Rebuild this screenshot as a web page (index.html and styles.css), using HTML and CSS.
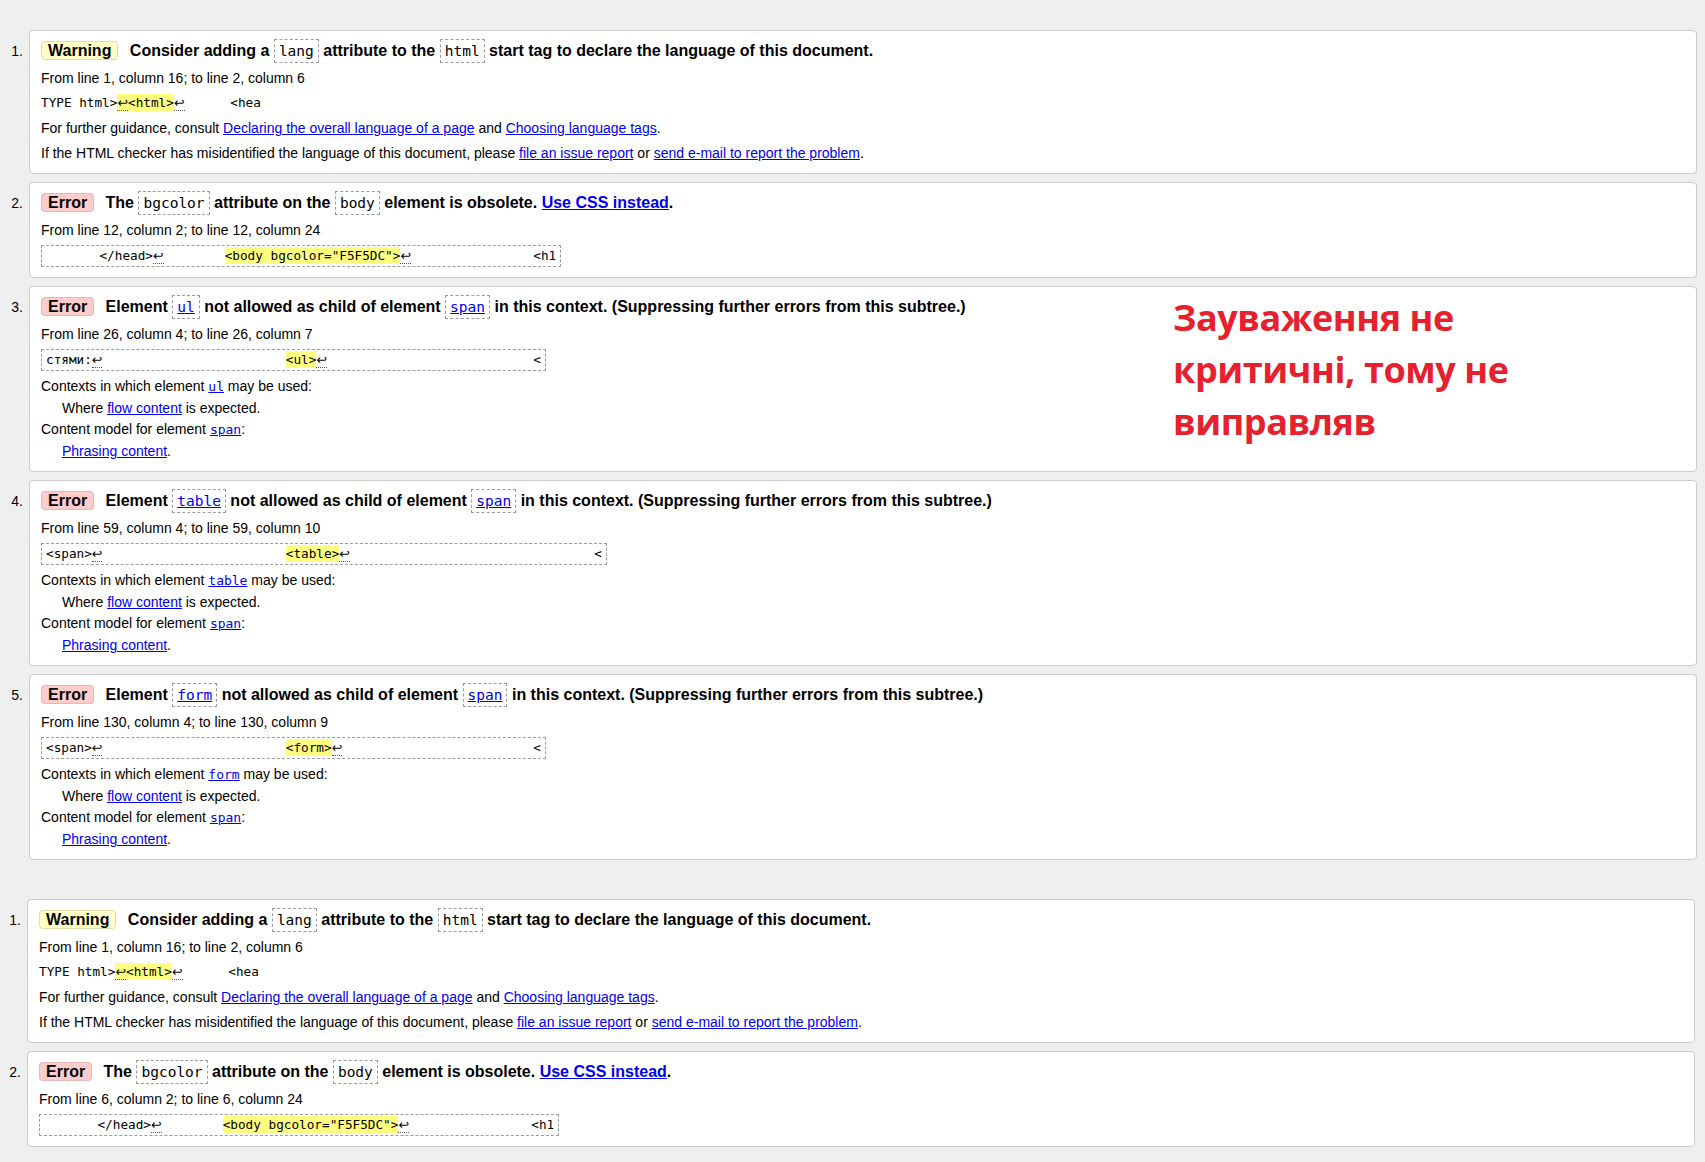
FILE: index.html
```html
<!DOCTYPE html>
<html lang="uk">
<head>
<meta charset="utf-8">
<title>Validation results</title>
<link rel="stylesheet" href="styles.css">
</head>
<body>
<div class="page">
  <ol class="msgs">
    <li class="msg">
      <span class="num">1.</span>
      <div class="card">
        <p class="head"><strong class="badge badge-warn">Warning</strong> Consider adding a <code class="cb">lang</code> attribute to the <code class="cb">html</code> start tag to declare the language of this document.</p>
        <p>From line 1, column 16; to line 2, column 6</p>
        <p class="ext">TYPE html&gt;<b class="hl"><span class="lf">↩</span>&lt;html&gt;</b><span class="lf">↩</span>      &lt;hea</p>
        <p>For further guidance, consult <a href="#">Declaring the overall language of a page</a> and <a href="#">Choosing language tags</a>.</p>
        <p>If the HTML checker has misidentified the language of this document, please <a href="#">file an issue report</a> or <a href="#">send e-mail to report the problem</a>.</p>
      </div>
    </li>
    <li class="msg">
      <span class="num">2.</span>
      <div class="card">
        <p class="head"><strong class="badge badge-err">Error</strong> The <code class="cb">bgcolor</code> attribute on the <code class="cb">body</code> element is obsolete. <a href="#">Use CSS instead</a>.</p>
        <p>From line 12, column 2; to line 12, column 24</p>
        <p class="ext box">       &lt;/head&gt;<span class="lf">↩</span>        <b class="hl">&lt;body bgcolor="F5F5DC"&gt;</b><span class="lf">↩</span>                &lt;h1</p>
      </div>
    </li>
    <li class="msg">
      <span class="num">3.</span>
      <div class="card">
        <p class="head"><strong class="badge badge-err">Error</strong> Element <code class="cb"><a href="#">ul</a></code> not allowed as child of element <code class="cb"><a href="#">span</a></code> in this context. (Suppressing further errors from this subtree.)</p>
        <p>From line 26, column 4; to line 26, column 7</p>
        <p class="ext box">стями:<span class="lf">↩</span>                        <b class="hl">&lt;ul&gt;</b><span class="lf">↩</span>                           &lt;</p>
        <dl>
          <dt>Contexts in which element <a href="#"><code class="m">ul</code></a> may be used:</dt>
          <dd>Where <a href="#">flow content</a> is expected.</dd>
          <dt>Content model for element <a href="#"><code class="m">span</code></a>:</dt>
          <dd><a href="#">Phrasing content</a>.</dd>
        </dl>
      </div>
    </li>
    <li class="msg">
      <span class="num">4.</span>
      <div class="card">
        <p class="head"><strong class="badge badge-err">Error</strong> Element <code class="cb"><a href="#">table</a></code> not allowed as child of element <code class="cb"><a href="#">span</a></code> in this context. (Suppressing further errors from this subtree.)</p>
        <p>From line 59, column 4; to line 59, column 10</p>
        <p class="ext box">&lt;span&gt;<span class="lf">↩</span>                        <b class="hl">&lt;table&gt;</b><span class="lf">↩</span>                                &lt;</p>
        <dl>
          <dt>Contexts in which element <a href="#"><code class="m">table</code></a> may be used:</dt>
          <dd>Where <a href="#">flow content</a> is expected.</dd>
          <dt>Content model for element <a href="#"><code class="m">span</code></a>:</dt>
          <dd><a href="#">Phrasing content</a>.</dd>
        </dl>
      </div>
    </li>
    <li class="msg">
      <span class="num">5.</span>
      <div class="card">
        <p class="head"><strong class="badge badge-err">Error</strong> Element <code class="cb"><a href="#">form</a></code> not allowed as child of element <code class="cb"><a href="#">span</a></code> in this context. (Suppressing further errors from this subtree.)</p>
        <p>From line 130, column 4; to line 130, column 9</p>
        <p class="ext box">&lt;span&gt;<span class="lf">↩</span>                        <b class="hl">&lt;form&gt;</b><span class="lf">↩</span>                         &lt;</p>
        <dl>
          <dt>Contexts in which element <a href="#"><code class="m">form</code></a> may be used:</dt>
          <dd>Where <a href="#">flow content</a> is expected.</dd>
          <dt>Content model for element <a href="#"><code class="m">span</code></a>:</dt>
          <dd><a href="#">Phrasing content</a>.</dd>
        </dl>
      </div>
    </li>
  </ol>

  <ol class="msgs msgs-2">
    <li class="msg">
      <span class="num">1.</span>
      <div class="card">
        <p class="head"><strong class="badge badge-warn">Warning</strong> Consider adding a <code class="cb">lang</code> attribute to the <code class="cb">html</code> start tag to declare the language of this document.</p>
        <p>From line 1, column 16; to line 2, column 6</p>
        <p class="ext">TYPE html&gt;<b class="hl"><span class="lf">↩</span>&lt;html&gt;</b><span class="lf">↩</span>      &lt;hea</p>
        <p>For further guidance, consult <a href="#">Declaring the overall language of a page</a> and <a href="#">Choosing language tags</a>.</p>
        <p>If the HTML checker has misidentified the language of this document, please <a href="#">file an issue report</a> or <a href="#">send e-mail to report the problem</a>.</p>
      </div>
    </li>
    <li class="msg">
      <span class="num">2.</span>
      <div class="card">
        <p class="head"><strong class="badge badge-err">Error</strong> The <code class="cb">bgcolor</code> attribute on the <code class="cb">body</code> element is obsolete. <a href="#">Use CSS instead</a>.</p>
        <p>From line 6, column 2; to line 6, column 24</p>
        <p class="ext box">       &lt;/head&gt;<span class="lf">↩</span>        <b class="hl">&lt;body bgcolor="F5F5DC"&gt;</b><span class="lf">↩</span>                &lt;h1</p>
      </div>
    </li>
  </ol>

  <p class="note">Зауваження не<br>критичні, тому не<br>виправляв</p>
</div>
</body>
</html>
```

FILE: styles.css
```css
* { box-sizing: border-box; }

html, body { margin: 0; }

body {
  background: #efefef;
  font-family: Arial, "Liberation Sans", sans-serif;
  font-size: 14px;
  color: #000;
}

.page {
  position: relative;
  padding: 30px 0 20px;
}

.msgs {
  list-style: none;
  margin: 0 8px 0 0;
  padding: 0;
}

.msgs-2 {
  margin: 39px 10px 0 0;
}

.msg {
  display: flex;
  align-items: baseline;
  margin-bottom: 8px;
}

.num {
  flex: none;
  width: 23px;
  margin-right: 6px;
  text-align: right;
  font-size: 14px;
}

.msgs-2 .num { width: 21px; }

.card {
  flex: 1;
  min-width: 0;
  background: #fff;
  border: 1px solid #cbcbcb;
  border-radius: 4px;
  padding: 8px 11px 5px;
}

.card p {
  margin: 5px 0;
  line-height: 20px;
}

.card p.head {
  margin: 0;
  line-height: 24px;
  font-size: 16px;
  font-weight: bold;
}

.badge {
  padding: 0 6px;
  border: 1px solid #ddd;
  border-radius: 4px;
  margin-right: 7px;
  font-weight: bold;
  line-height: 1;
}

.badge-warn {
  background: #ffffc6;
  border-color: #dedeb0;
}

.badge-err {
  background: #ffcccc;
  border-color: #e6b8b8;
}

.cb {
  font-family: "DejaVu Sans Mono", monospace;
  font-size: 14.5px;
  font-weight: normal;
  border: 1px dashed #9c9c9c;
  padding: 3px 4px;
  line-height: 1;
}

.cb a { font-weight: normal; }

.card p.ext {
  font-family: "DejaVu Sans Mono", monospace;
  font-size: 12.7px;
  white-space: pre;
}

.card p.box {
  width: fit-content;
  border: 1px dashed #9c9c9c;
  padding: 0 4px;
}

.hl {
  background: #ffff80;
  font-weight: normal;
  padding: 1px 0;
  line-height: 1;
}

.lf {
  font-family: "DejaVu Sans", sans-serif;
  border-bottom: 1px dotted #555;
  line-height: 1;
}

.card dl {
  margin: 5px 0;
  line-height: 20px;
}

.card dt { margin-top: 1px; }
.card dt:first-child { margin-top: 0; }

.card dd {
  margin: 2px 0 0 21px;
}

.m {
  font-family: "DejaVu Sans Mono", monospace;
  font-size: 13px;
  line-height: 1;
}

a { color: #0000ee; }

.note {
  position: absolute;
  left: 1173px;
  top: 292px;
  margin: 0;
  color: #e6212d;
  font-family: "Open Sans", sans-serif;
  font-weight: 700;
  font-size: 36px;
  line-height: 52px;
  letter-spacing: -0.4px;
}
```
